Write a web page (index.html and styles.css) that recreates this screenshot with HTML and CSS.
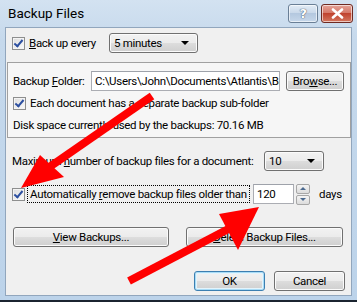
FILE: index.html
```html
<!DOCTYPE html>
<html lang="en">
<head>
    <meta charset="UTF-8">
    <title>Backup Files</title>
    <link rel="stylesheet" href="styles.css">
</head>
<body>
<div class="window">
    <div class="titlebar">
        <span class="title">Backup Files</span>
        <div class="caption-buttons">
            <div class="cap-btn help">?</div>
            <div class="cap-btn close">
                <svg width="13" height="11" viewBox="0 0 13 11"><path d="M2 1.5 L11 9.5 M11 1.5 L2 9.5" stroke="#fff" stroke-width="2.6" stroke-linecap="round"/></svg>
            </div>
        </div>
    </div>

    <div class="client">
        <div class="row row-first">
            <label class="check check-first"><span class="box checked"></span><span><u>B</u>ack up every</span></label>
            <div class="combo combo-interval">5 minutes<span class="drop"></span></div>
        </div>

        <div class="panel">
            <div class="row row-folder">
                <span class="label label-folder">Backup <u>F</u>older:</span>
                <div class="textbox path">C:\Users\John\Documents\Atlantis\Bac</div>
                <div class="button browse">Bro<u>w</u>se...</div>
            </div>
            <div class="row row-sub">
                <label class="check"><span class="box checked"></span><span>Each document has a separate backup sub-folder</span></label>
            </div>
            <div class="row row-disk">
                <span class="label">Disk space currently used by the backups: 70.16 MB</span>
            </div>
        </div>

        <div class="row row-max">
            <span class="label label-max">Maximum <u>n</u>umber of backup files for a document:</span>
            <div class="combo combo-max">10<span class="drop"></span></div>
        </div>

        <div class="row row-auto">
            <label class="check check-auto"><span class="box checked"></span><span class="focus">Automatically <u>r</u>emove backup files older than</span></label>
            <div class="textbox days">120</div>
            <div class="spin"><span class="up"></span><span class="down"></span></div>
            <span class="label unit">days</span>
        </div>

        <div class="row row-buttons">
            <div class="button view"><u>V</u>iew Backups...</div>
            <div class="button delete"><u>D</u>elete Backup Files...</div>
        </div>

        <div class="row row-dialog">
            <div class="button dialog default">OK</div>
            <div class="button dialog">Cancel</div>
        </div>
    </div>

    <!-- annotation arrows drawn over the dialog -->
    <svg class="arrows" width="357" height="302" viewBox="0 0 357 302">
        <line x1="152" y1="96" x2="48" y2="168" stroke="#f00" stroke-width="8"/>
        <polygon points="21,188 40,155 64,177" fill="#f00"/>
        <line x1="129" y1="281" x2="236" y2="225" stroke="#f00" stroke-width="8"/>
        <polygon points="259,207 219,214 238,250" fill="#f00"/>
    </svg>
</div>
</body>
</html>
```

FILE: styles.css
```css
body {
    margin: 0;
    font-family: Roboto, "Open Sans", sans-serif;
    font-size: 11.5px;
    letter-spacing: -0.3px;
    color: #000;
}
u {
    text-decoration: underline;
    text-underline-offset: 1px;
}
.window {
    position: relative;
    width: 357px;
    height: 302px;
    box-sizing: border-box;
    background: linear-gradient(to bottom, #d3e2f1, #c6d9ec 40px, #bcd3ea);
    border-bottom: 2px solid #1b2430;
    padding: 0 5px 4px 5px;
    display: flex;
    flex-direction: column;
}
.titlebar {
    height: 27px;
    display: flex;
    align-items: flex-start;
    justify-content: space-between;
}
.title {
    padding: 5px 0 0 3px;
    font-size: 13.5px;
    letter-spacing: 0;
}
.caption-buttons {
    display: flex;
    gap: 3px;
    margin-top: 4px;
    margin-right: -1px;
}
.cap-btn {
    height: 17px;
    border: 1px solid #6a7f96;
    border-radius: 3px;
    box-shadow: inset 0 0 0 1px rgba(255,255,255,0.6);
    display: flex;
    align-items: center;
    justify-content: center;
}
.help {
    width: 28px;
    background: linear-gradient(to bottom, #e3ecf6 0%, #cad9ea 45%, #b4c8df 50%, #c6d7ea 100%);
    color: #fff;
    font-family: "DejaVu Sans", sans-serif;
    font-weight: bold;
    font-size: 13px;
    text-shadow: 0 0 1px #3c4e63, 0 0 1px #3c4e63;
}
.close {
    width: 30px;
    border-color: #6f2a22;
    background: linear-gradient(to bottom, #e5a398 0%, #d67a6a 45%, #c0432f 50%, #d4775f 100%);
}
.client {
    flex: 1;
    background: #f0f0f0;
    border: 1px solid #91a6bd;
    padding-left: 6px;
    padding-right: 6px;
    display: flex;
    flex-direction: column;
}
.row {
    display: flex;
    align-items: center;
}
.label {
    white-space: nowrap;
}
.check {
    display: flex;
    align-items: center;
    gap: 4px;
    white-space: nowrap;
}
.box {
    width: 11px;
    height: 11px;
    flex: none;
    border: 1px solid #8e8f8f;
    background: linear-gradient(135deg, #dcdcdc, #fbfbfb);
    box-shadow: inset 0 0 0 1px #f4f4f4;
    position: relative;
}
.box.checked::after {
    content: "";
    position: absolute;
    left: 3px;
    top: 0px;
    width: 3px;
    height: 7px;
    border: solid #2c4fa0;
    border-width: 0 2px 2px 0;
    transform: rotate(40deg);
}
.row-first {
    height: 20px;
    margin-top: 5px;
}
.check-first {
    width: 97px;
}
.combo {
    height: 20px;
    box-sizing: border-box;
    border: 1px solid #707070;
    border-radius: 3px;
    background: linear-gradient(to bottom, #f2f2f2 0%, #ebebeb 50%, #dddddd 51%, #cfcfcf 100%);
    box-shadow: inset 0 0 0 1px #fbfbfb;
    display: flex;
    align-items: center;
    justify-content: space-between;
    padding: 0 8px 0 4px;
    flex: none;
}
.drop {
    width: 0;
    height: 0;
    border-left: 4px solid transparent;
    border-right: 4px solid transparent;
    border-top: 4px solid #000;
}
.combo-interval {
    width: 89px;
}
.panel {
    margin: 9px -6px 0 -5px;
    height: 74px;
    border: 1px solid #a0a0a0;
    background: #f6f6f6;
    padding: 0 6px 0 5px;
    display: flex;
    flex-direction: column;
}
.row-folder {
    height: 20px;
    margin-top: 8px;
}
.label-folder {
    width: 78px;
}
.textbox {
    height: 20px;
    box-sizing: border-box;
    border: 1px solid #abadb3;
    border-top-color: #9ea2aa;
    background: #fff;
    display: flex;
    align-items: center;
    padding-left: 3px;
    overflow: hidden;
    white-space: nowrap;
    flex: none;
}
.path {
    width: 189px;
}
.button {
    height: 20px;
    box-sizing: border-box;
    border: 1px solid #707070;
    border-radius: 3px;
    background: linear-gradient(to bottom, #f2f2f2 0%, #ebebeb 50%, #dddddd 51%, #cfcfcf 100%);
    box-shadow: inset 0 0 0 1px #fbfbfb;
    display: flex;
    align-items: center;
    justify-content: center;
    white-space: nowrap;
    flex: none;
}
.browse {
    width: 58px;
    margin-left: 6px;
}
.row-sub {
    height: 16px;
    margin-top: 4px;
}
.row-disk {
    height: 16px;
    margin-top: 6px;
}
.row-max {
    height: 20px;
    margin-top: 13px;
}
.label-max {
    width: 252px;
}
.combo-max {
    width: 60px;
}
.row-auto {
    height: 20px;
    margin-top: 13px;
}
.check-auto {
    width: 241px;
}
.focus {
    outline: 1px dotted #000;
    outline-offset: 1px;
    padding: 0 1px;
}
.days {
    width: 41px;
}
.spin {
    display: flex;
    flex-direction: column;
    gap: 1px;
    margin-left: 2px;
}
.spin span {
    width: 14px;
    height: 10px;
    border: 1px solid #a7a7a7;
    border-radius: 2px;
    background: linear-gradient(to bottom, #f4f4f4, #dcdcdc);
    position: relative;
    box-sizing: border-box;
}
.spin span::after {
    content: "";
    position: absolute;
    left: 3px;
    width: 0;
    height: 0;
    border-left: 3px solid transparent;
    border-right: 3px solid transparent;
}
.spin .up::after {
    top: 2px;
    border-bottom: 3px solid #4c6a8f;
}
.spin .down::after {
    top: 2px;
    border-top: 3px solid #4c6a8f;
}
.unit {
    margin-left: 9px;
}
.row-buttons {
    margin-top: 23px;
}
.view {
    width: 156px;
    margin-left: 1px;
}
.delete {
    width: 157px;
    margin-left: 17px;
}
.row-dialog {
    margin-top: 24px;
    justify-content: flex-end;
    gap: 9px;
}
.dialog {
    width: 71px;
}
.default {
    border-color: #3c7fb1;
    box-shadow: inset 0 0 0 1px #a9dcf6, inset 0 0 0 2px #e4f4fc;
}
.arrows {
    position: absolute;
    left: 0;
    top: 0;
    pointer-events: none;
}
```
